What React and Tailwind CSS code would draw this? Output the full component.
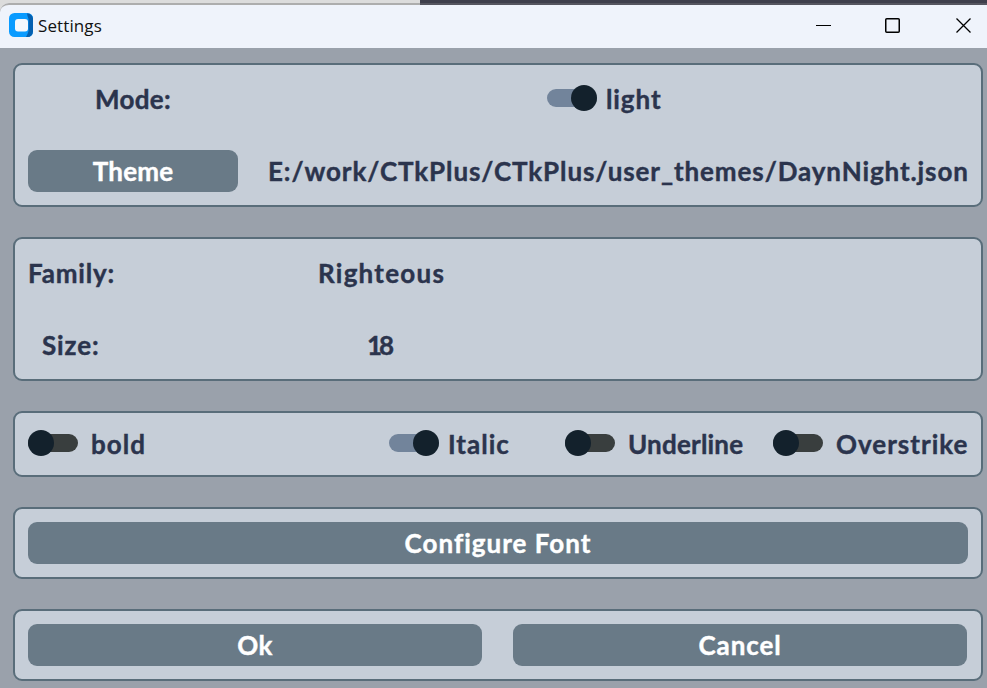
const labelText = "shrink-0 whitespace-nowrap text-[#2b344d] [-webkit-text-stroke:0.4px_#2b344d]";

function Frame({ className = "", children }) {
  return (
    <section className={`w-[970px] rounded-[9px] border-2 border-[#596d7a] bg-[#c6ced8] px-[13px] ${className}`}>
      {children}
    </section>
  );
}

function Button({ className = "", children }) {
  return (
    <button className={`flex h-[42px] shrink-0 items-center justify-center rounded-[9px] bg-[#697a87] font-bold text-white [-webkit-text-stroke:0.4px_white] ${className}`}>
      {children}
    </button>
  );
}

function Switch({ on = false }) {
  return (
    <span className="mb-0.5 flex h-[26px] w-[50px] shrink-0 items-center">
      <span
        className={`flex h-[18px] w-[50px] items-center rounded-full ${
          on ? "justify-end bg-[#72849b]" : "justify-start bg-[#393e3e]"
        }`}
      >
        <span className="size-[26px] shrink-0 rounded-full bg-[#13212c]" />
      </span>
    </span>
  );
}

function TitleBar() {
  return (
    <header className="flex h-[48px] flex-col bg-[#dcdcdc]">
      <div className="flex h-[3px] shrink-0">
        <div className="w-[420px] bg-[#dcdcdc]" />
        <div className="flex-1 bg-[#3f3f4c]" />
      </div>
      <div className="flex h-[45px] flex-col rounded-tl-[9px] bg-[#eff3fb]">
        <div className="flex h-[9px] shrink-0">
          <div className="w-[420px] rounded-tl-[9px] border-t-2 border-[#adadad]" />
          <div className="flex-1 border-t-2 border-[#55555f]" />
        </div>
        <div className="flex h-[28px] items-center pl-[9px]">
          <svg className="-mt-0.5" width="24" height="24" viewBox="0 0 24 24">
            <rect width="24" height="24" rx="5.5" fill="#0a9bff" />
            <path d="M18 0.500h0.500A5.500 5.500 0 0 1 24 5.500v13a5.500 5.500 0 0 1-5.500 5.500H17l1.500-3 1-3V6l-1-3z" fill="#0560b0" />
            <rect x="6" y="6" width="13" height="12.500" rx="3" fill="#f5f8fd" />
          </svg>
          <h1 className="-mt-0.5 ml-[5px] font-['Open_Sans',sans-serif] text-[17px] leading-none font-normal tracking-[0.1px] text-[#111]">
            Settings
          </h1>
          <svg className="ml-auto" width="171" height="20" viewBox="816 15 171 20" fill="none" stroke="#000">
            <path d="M816 24.500h15" />
            <rect x="885.750" y="17.750" width="13.500" height="13.500" rx="1" strokeWidth="1.500" />
            <path d="m956.500 17.500 14 14m0-14-14 14" strokeWidth="1.300" />
          </svg>
        </div>
      </div>
    </header>
  );
}

export default function App() {
  return (
    <main className="flex h-[688px] w-[987px] flex-col overflow-hidden bg-[#9aa1ab] font-['Lato',sans-serif] text-[26px] leading-[32px] font-bold">
      <TitleBar />
      <div className="flex flex-col gap-[30px] pt-[15px] pl-[13px]">
        <Frame className="flex h-[144px] flex-col gap-[30px] pt-[13px]">
          <div className="flex h-[42px] items-center">
            <span className={`ml-[67px] w-[452px] tracking-[0.3px] ${labelText}`}>Mode:</span>
            <Switch on />
            <span className={`ml-[9px] tracking-[0.9px] ${labelText}`}>light</span>
          </div>
          <div className="flex h-[42px] items-center">
            <Button className="w-[210px] tracking-[0.2px]">Theme</Button>
            <span className={`ml-[30px] tracking-[0.9px] ${labelText}`}>E:/work/CTkPlus/CTkPlus/user_themes/DaynNight.json</span>
          </div>
        </Frame>

        <Frame className="flex h-[144px] flex-col gap-[30px] pt-[13px]">
          <div className="flex h-[42px] items-center">
            <span className={`w-[290px] tracking-[0.8px] ${labelText}`}>Family:</span>
            <span className={`tracking-[1.25px] ${labelText}`}>Righteous</span>
          </div>
          <div className="flex h-[42px] items-center">
            <span className={`ml-[14px] w-[325px] tracking-[0.9px] ${labelText}`}>Size:</span>
            <span className={`tracking-[-3px] ${labelText}`}>18</span>
          </div>
        </Frame>

        <Frame className="flex h-[66px] items-center">
          <div className="flex w-[361px] shrink-0 items-center gap-[13px]">
            <Switch />
            <span className={`tracking-[1px] ${labelText}`}>bold</span>
          </div>
          <div className="flex w-[176px] shrink-0 items-center gap-[9px]">
            <Switch on />
            <span className={`tracking-[1px] ${labelText}`}>Italic</span>
          </div>
          <div className="flex w-[208px] shrink-0 items-center gap-[13px]">
            <Switch />
            <span className={`tracking-[0.2px] ${labelText}`}>Underline</span>
          </div>
          <div className="flex shrink-0 items-center gap-[13px]">
            <Switch />
            <span className={`tracking-[1px] ${labelText}`}>Overstrike</span>
          </div>
        </Frame>

        <Frame className="h-[72px] pt-[13px]">
          <Button className="w-[940px] tracking-[1px]">Configure Font</Button>
        </Frame>

        <Frame className="flex h-[72px] gap-[31px] pt-[13px]">
          <Button className="w-[454px] tracking-[0.3px]">Ok</Button>
          <Button className="w-[454px] tracking-[0.9px]">Cancel</Button>
        </Frame>
      </div>
    </main>
  );
}
